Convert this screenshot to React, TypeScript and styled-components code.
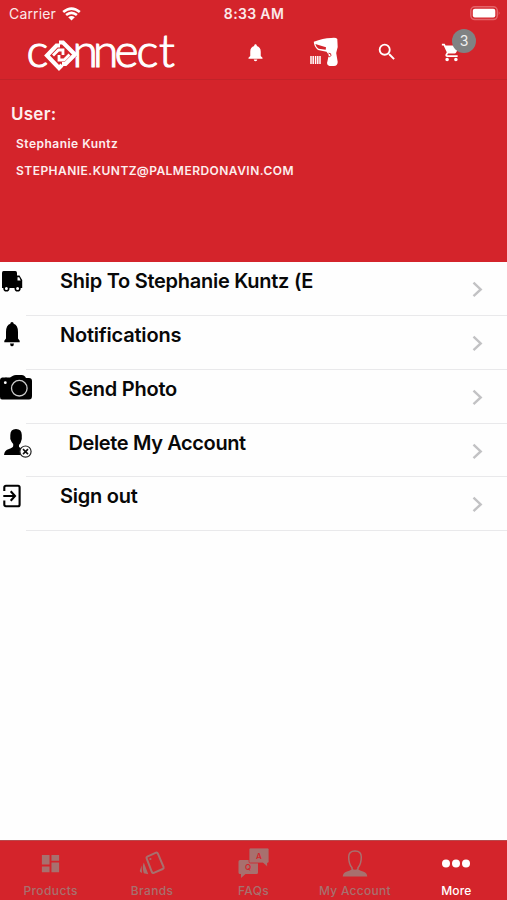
import React from 'react';
import styled, { createGlobalStyle } from 'styled-components';
import { MdNotifications, MdSearch, MdShoppingCart, MdDashboard } from 'react-icons/md';

const RED = '#d4242b';
const MUTED = '#a8706e';

const GlobalStyle = createGlobalStyle`
  * { box-sizing: border-box; }
  body { margin: 0; background: #fff; font-family: Inter, "Liberation Sans", sans-serif; }
  svg { display: block; flex: none; overflow: visible; }
`;

const Screen = styled.div`
  width: 507px;
  height: 900px;
  display: flex;
  flex-direction: column;
  overflow: hidden;
  background: #fefefe;
`;

const StatusBar = styled.div`
  height: 28px;
  display: grid;
  grid-template-columns: 1fr auto 1fr;
  align-items: center;
  padding: 0 6px 0 9px;
  background: ${RED};
  color: #fbe9e9;
`;

const Carrier = styled.div`
  display: flex;
  align-items: center;
  gap: 6px;
  font-size: 14px;
  line-height: 20px;
  letter-spacing: 0.15px;
`;

const Clock = styled.div`
  font-size: 14px;
  font-weight: 600;
  letter-spacing: 0.35px;
  margin: -2px 2px 0 0;
`;

const BatterySlot = styled.div`
  justify-self: end;
  margin-top: -2px;
`;

const Header = styled.header`
  height: 52px;
  display: flex;
  align-items: flex-start;
  background: ${RED};
  border-bottom: 1px solid #c12329;
  color: #fff;
`;

const LogoSlot = styled.div`
  width: 245px;
  padding-left: 20px;
`;

const Action = styled.div<{ $width: number; $top: number }>`
  position: relative;
  width: ${(p) => p.$width}px;
  padding-top: ${(p) => p.$top}px;
`;

const Badge = styled.span`
  position: absolute;
  left: 11px;
  top: 1px;
  width: 24px;
  height: 24px;
  border-radius: 50%;
  background: #808283;
  color: #f0f0f0;
  font-size: 14px;
  line-height: 24px;
  text-align: center;
`;

const UserPanel = styled.section`
  height: 182px;
  background: ${RED};
  color: #fdeeee;
  padding: 24px 11px;
`;

const UserHeading = styled.h1`
  margin: 0 0 10px;
  font-size: 17px;
  line-height: 20px;
  font-weight: 600;
  letter-spacing: 0.25px;
`;

const UserLine = styled.p<{ $spacing: number }>`
  margin: 0 0 7px 5px;
  font-size: 12px;
  line-height: 20px;
  font-weight: 600;
  letter-spacing: ${(p) => p.$spacing}px;
`;

const Menu = styled.ul`
  list-style: none;
  margin: 0;
  padding: 0;
  flex: 1;
`;

const Row = styled.li`
  height: 53.85px;
  display: flex;
`;

const RowIcon = styled.div`
  width: 26px;
  flex: none;
  padding-top: 4px;
`;

const RowBody = styled.div<{ $indent: number }>`
  flex: 1;
  display: flex;
  justify-content: space-between;
  padding: 5px 24px 0 ${(p) => p.$indent}px;
  border-bottom: 1px solid #e9e9eb;
`;

const RowTitle = styled.span<{ $spacing: number }>`
  font-size: 20px;
  line-height: 28px;
  font-weight: 600;
  color: #080808;
  letter-spacing: ${(p) => p.$spacing}px;
  white-space: nowrap;
`;

const ChevronSlot = styled.div`
  padding-top: 14px;
`;

const TabBar = styled.nav`
  height: 60px;
  display: grid;
  grid-template-columns: repeat(5, 1fr);
  background: ${RED};
  border-top: 1px solid #b8494c;
`;

const Tab = styled.div<{ $active?: boolean }>`
  display: flex;
  flex-direction: column;
  align-items: center;
  color: ${(p) => (p.$active ? '#fff' : MUTED)};
`;

const TabIcon = styled.div`
  height: 42px;
  display: flex;
  align-items: center;
  padding-top: 3px;
`;

const TabLabel = styled.span<{ $spacing: number }>`
  font-size: 12px;
  line-height: 16px;
  font-weight: 500;
  letter-spacing: ${(p) => p.$spacing}px;
  white-space: nowrap;
`;

const Wifi = () => (
  <svg width="19" height="14" viewBox="0 0 19 14" fill="none" stroke="#fff" strokeWidth="2.6">
    <path d="M1.2 5.1Q9.5-2 17.8 5.1M4.1 8.1Q9.5 3.6 14.9 8.1" />
    <path d="M6.2 10.3Q9.5 7.5 12.8 10.3L9.5 13.6Z" fill="#fff" stroke="none" />
  </svg>
);

const Battery = () => (
  <svg width="31" height="15" viewBox="0 0 31 15">
    <rect x=".8" y=".8" width="26.5" height="12.8" rx="4" fill="none" stroke="#e4646a" strokeWidth="1.5" />
    <rect x="2.8" y="2.8" width="22.5" height="8.8" rx="2" fill="#fff" />
    <path d="M28.8 5.2q1.7 2 0 4z" fill="#e98084" />
  </svg>
);

const Logo = () => (
  <svg width="165" height="50" viewBox="-7 -5 165 50" fill="#fff">
    <g fontFamily="Lato, Inter, sans-serif" fontWeight="300" fontSize="46" stroke="#fff" strokeWidth="1.2">
      <text x="-.5" y="33.5">c</text>
      <text x="45.5 66 87.5 109.5 132" y="33.5">nnect</text>
    </g>
    <path d="M31 9L19 23L33 36L50 23L37 9Z" fill={RED} />
    <g fill="none" stroke="#fff">
      <path d="M33 12.5H29.5L20 22.5L32 35L35 32" strokeWidth="4.2" />
      <path d="M26 22.5L31.5 17H36V22" strokeWidth="2.8" />
      <path d="M32 9.5H36L48 21.5L38.5 31H35" strokeWidth="4.2" />
      <path d="M42.5 21.5L37 27H32V22" strokeWidth="2.8" />
    </g>
  </svg>
);

const Scanner = () => (
  <svg width="29" height="30" viewBox="0 0 29 30">
    <path d="M3.8 4.8Q13 1 21 1Q26 0 27.3 2L27.7 10L26.2 16L27.7 25Q27.5 29 24 29H19.5Q16 28 17.5 24L18.8 18L16.5 14.7L8 13Q4 10 3.8 4.8Z" fill="#fff" />
    <path d="M5.3 7L16 10.2L15.7 12.8L8.6 11.7Q6 9.8 5.3 7Z" fill={RED} />
    <path d="M18.5 16.2q3-.2 2.4 2.4q-1 2-2.6.8" fill="none" stroke={RED} strokeWidth="1" />
    <path d="M1 19v8M3.2 19v8M5.6 19v8M7.8 19v8M10 19v8" stroke="#fff" strokeWidth="1.5" />
  </svg>
);

const Truck = () => (
  <svg width="24" height="30" viewBox="0 0 24 30">
    <path d="M3.5 5H15.3Q17 5 17 7V9.5H19.5L22.2 14V22H2V7Q2 5 3.5 5Z" />
    <path d="M17.5 11.3H19.2L20.7 14.5H17.5Z" fill="#fff" />
    <circle cx="6.4" cy="22.5" r="2.3" fill="#fff" stroke="#000" strokeWidth="1.6" />
    <circle cx="17.6" cy="22.5" r="2.3" fill="#fff" stroke="#000" strokeWidth="1.6" />
  </svg>
);

const BlackBell = () => (
  <svg width="24" height="30" viewBox="0 0 24 30">
    <path d="M10.3 3.8Q10.4 2 12 2T13.7 3.8Q18 5.2 18 12V18.5L19.7 20.8V22.3H4.3V20.8L6 18.5V12Q6 5.2 10.3 3.8ZM10 23.5H14Q13.8 26.3 12 26.3T10 23.5Z" />
  </svg>
);

const Camera = () => (
  <svg width="32" height="30" viewBox="0 0 32 30">
    <path d="M2 3.5H5Q6 2.8 7 3.5H10L13 1.8Q14 1 16 1H22Q24 1 25 2.5L26 4H29Q32 4 32 7V22Q32 25.5 29 25.5H2Q0 25.5 0 23V6Q0 4 2 3.5Z" />
    <circle cx="19.3" cy="14.2" r="7.8" fill="none" stroke="#ccc" strokeWidth="1.3" />
    <circle cx="5.3" cy="8.7" r="1.4" fill="#fff" />
  </svg>
);

const DeletePerson = () => (
  <svg width="33" height="30" viewBox="0 0 33 30">
    <path d="M10.3 7Q10.3 1 16 1T21.8 7V11Q21 15 19 17V19Q21 20.5 25 22V27H4Q4.5 22 9 21Q13.2 19.7 13.2 18V16Q11.3 14 10.3 11Z" />
    <circle cx="25.5" cy="23.6" r="5.6" fill="#fff" stroke="#222" strokeWidth="1.2" />
    <path d="M23 21.1l5 5M28 21.1l-5 5" stroke="#111" strokeWidth="1.6" />
  </svg>
);

const SignOut = () => (
  <svg width="24" height="30" viewBox="0 0 24 30" fill="none" stroke="#000" strokeWidth="2.1">
    <path d="M4.3 10V6.5Q4.3 4.8 6 4.8H18Q19.6 4.8 19.6 6.5V23.5Q19.6 25.3 18 25.3H6Q4.3 25.3 4.3 23.5V19.5" />
    <path d="M3.3 15H14M10.7 10.3L15 15L10.7 19.7" />
  </svg>
);

const Chevron = () => (
  <svg width="11" height="17" viewBox="0 0 11 17" fill="none" stroke="#c2c2c4" strokeWidth="2.4">
    <path d="M1.5 1.7L8.7 8.4L1.5 15.1" />
  </svg>
);

const Brands = () => (
  <svg width="26" height="26" viewBox="0 0 26 26" fill="none" stroke="currentColor">
    <path d="M8.3 5.6L17 1.7Q18.3 1.3 18.9 2.6L24.6 16.2Q25 17.5 23.7 18L14.8 21.8Q13.5 22.3 12.9 21L7.6 7.4Q7.1 6.2 8.3 5.6Z" strokeWidth="2" />
    <circle cx="11.4" cy="8" r="1.1" fill="currentColor" stroke="none" />
    <path d="M4.8 11.5Q2.8 16 4.8 22.2L9.3 23.3ZM2.6 14.5L.7 20Q.8 21 3 22Z" fill="currentColor" stroke="none" />
  </svg>
);

const Faq = () => (
  <svg width="31" height="31" viewBox="0 0 31 31" fill="currentColor">
    <path d="M2 12H18.5Q20 12 20 13.5V24.5Q20 26 18.5 26H7.5L3 30V26H2Q.5 26 .5 24.5V13.5Q.5 12 2 12Z" />
    <path d="M12.5 0H29.5Q31 0 31 1.5V13.5Q31 15 29.5 15V19L25 15H12.5Q11 15 11 13.5V1.5Q11 0 12.5 0Z" stroke={RED} strokeWidth=".8" />
    <g fill={RED} fontFamily="Inter, sans-serif" fontWeight="600" fontSize="8">
      <text x="7" y="22">Q</text>
      <text x="18" y="10.5">A</text>
    </g>
  </svg>
);

const Person = () => (
  <svg width="26" height="28" viewBox="0 0 26 28" fill="none" stroke="currentColor">
    <path d="M10 19V17.8Q6.7 14 6.7 7Q6.7 1 13 1T19.3 7Q19.3 14 16 17.8V19" strokeWidth="1.5" />
    <path d="M10 18.5Q10 20 5 21.5Q1 22.5 .7 26.5H25.3Q25 22.5 21 21.5Q16 20 16 18.5Q13 21 10 18.5Z" fill="currentColor" stroke="none" />
  </svg>
);

const Dots = () => (
  <svg width="28" height="10" viewBox="0 0 28 10" fill="currentColor">
    <circle cx="4" cy="4.5" r="4" /><circle cx="14" cy="4.5" r="4" /><circle cx="24" cy="4.5" r="4" />
  </svg>
);

const rows = [
  { title: 'Ship To Stephanie Kuntz (E', icon: <Truck />, indent: 34, spacing: -0.27 },
  { title: 'Notifications', icon: <BlackBell />, indent: 34, spacing: -0.2 },
  { title: 'Send Photo', icon: <Camera />, indent: 42.5, spacing: -0.25 },
  { title: 'Delete My Account', icon: <DeletePerson />, indent: 42.5, spacing: -0.38 },
  { title: 'Sign out', icon: <SignOut />, indent: 34, spacing: -0.25 },
];

const tabs = [
  { label: 'Products', icon: <MdDashboard size={23} />, spacing: 0.4 },
  { label: 'Brands', icon: <Brands />, spacing: 0.4 },
  { label: 'FAQs', icon: <Faq />, spacing: 0.25 },
  { label: 'My Account', icon: <Person />, spacing: 0.25 },
  { label: 'More', icon: <Dots />, spacing: 0.1, active: true },
];

export default function App() {
  return (
    <Screen>
      <GlobalStyle />
      <StatusBar>
        <Carrier>Carrier <Wifi /></Carrier>
        <Clock>8:33 AM</Clock>
        <BatterySlot><Battery /></BatterySlot>
      </StatusBar>
      <Header>
        <LogoSlot><Logo /></LogoSlot>
        <Action $width={65} $top={14}><MdNotifications size={21} /></Action>
        <Action $width={66} $top={9}><Scanner /></Action>
        <Action $width={65} $top={13}><MdSearch size={22} /></Action>
        <Action $width={40} $top={14}><MdShoppingCart size={21} /><Badge>3</Badge></Action>
      </Header>
      <UserPanel>
        <UserHeading>User:</UserHeading>
        <UserLine $spacing={0.48}>Stephanie Kuntz</UserLine>
        <UserLine $spacing={0.47}>STEPHANIE.KUNTZ@PALMERDONAVIN.COM</UserLine>
      </UserPanel>
      <Menu>
        {rows.map((row) => (
          <Row key={row.title}>
            <RowIcon>{row.icon}</RowIcon>
            <RowBody $indent={row.indent}>
              <RowTitle $spacing={row.spacing}>{row.title}</RowTitle>
              <ChevronSlot><Chevron /></ChevronSlot>
            </RowBody>
          </Row>
        ))}
      </Menu>
      <TabBar>
        {tabs.map((tab) => (
          <Tab key={tab.label} $active={tab.active}>
            <TabIcon>{tab.icon}</TabIcon>
            <TabLabel $spacing={tab.spacing}>{tab.label}</TabLabel>
          </Tab>
        ))}
      </TabBar>
    </Screen>
  );
}
